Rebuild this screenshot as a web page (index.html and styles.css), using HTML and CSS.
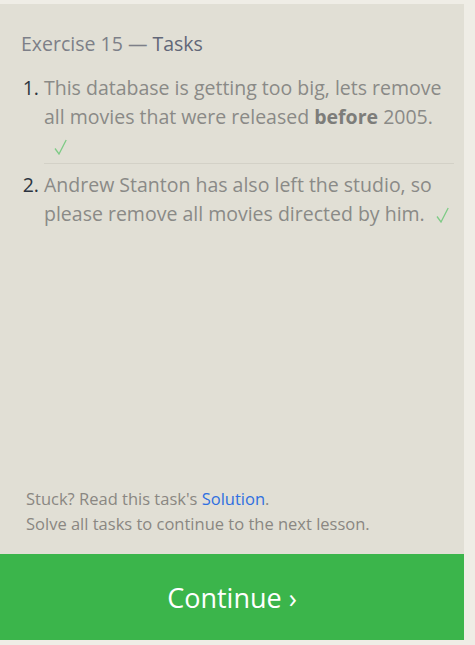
FILE: index.html
```html
<!DOCTYPE html>
<html>
<head>
<meta charset="utf-8">
<link rel="stylesheet" href="styles.css">
</head>
<body>
<div class="panel">
  <div class="content">
    <h2 class="title"><span class="muted">Exercise 15 —</span> Tasks</h2>
    <ol class="tasks">
      <li class="task">This database is getting too big, lets remove all movies that were released <strong>before</strong> 2005. <svg class="check" viewBox="0 0 13 16" width="13" height="16"><path d="M1 9.5 L5 15 L12.2 1" fill="none" stroke="#7ecb86" stroke-width="1.3"/></svg></li>
      <li class="task">Andrew Stanton has also left the studio, so please remove all movies directed by him. <svg class="check" viewBox="0 0 13 16" width="13" height="16"><path d="M1 9.5 L5 15 L12.2 1" fill="none" stroke="#7ecb86" stroke-width="1.3"/></svg></li>
    </ol>
  </div>
  <div class="footer">
    <div>Stuck? Read this task's <a class="link" href="#">Solution</a>.</div>
    <div>Solve all tasks to continue to the next lesson.</div>
  </div>
  <div class="continue">Continue ›</div>
</div>
</body>
</html>
```
FILE: styles.css
```css
html, body {
  margin: 0;
  padding: 0;
  background: #efede6;
  font-family: "Open Sans", "Noto Sans", sans-serif;
}
.panel {
  width: 464px;
  height: 636px;
  margin-top: 4px;
  background: #e1dfd5;
  display: flex;
  flex-direction: column;
}
.content {
  flex: 1;
  padding: 28px 10px 0 21px;
}
.title {
  margin: 0;
  font-size: 19.5px;
  font-weight: 400;
  line-height: 24px;
  color: #616778;
}
.title .muted {
  color: #7d7f88;
}
.tasks {
  margin: 15px 0 0;
  padding: 0 0 0 23px;
}
.task {
  font-size: 19.5px;
  line-height: 29px;
  color: #8a8a87;
  padding: 2px 0 3px;
}
.task::marker {
  color: #2c3440;
}
.task + .task {
  border-top: 1px solid #d3d1c7;
  padding-top: 6px;
}
.task strong {
  font-weight: 700;
  color: #7d7d7a;
}
.check {
  display: inline-block;
  margin-left: 6px;
  vertical-align: -2px;
}
.task:first-child .check {
  margin-left: 10px;
}
.footer {
  padding: 0 0 18px 26px;
  font-size: 16.5px;
  line-height: 25px;
  color: #8a8782;
}
.link {
  color: #2f6fe0;
  text-decoration: none;
}
.continue {
  height: 86px;
  background: #3bb54b;
  color: #ffffff;
  font-size: 27px;
  display: flex;
  align-items: center;
  justify-content: center;
}
```
